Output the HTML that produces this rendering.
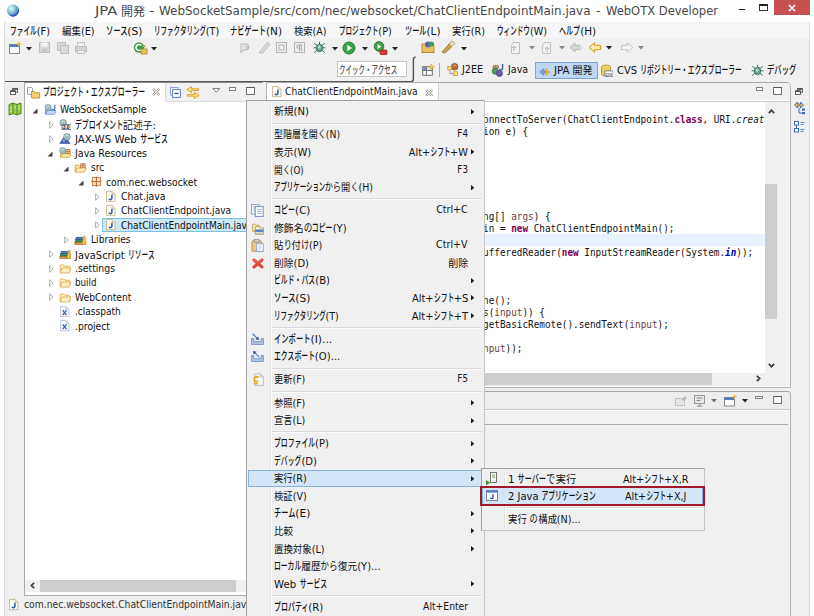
<!DOCTYPE html><html lang="ja"><head><meta charset="utf-8"><title>JPA 開発 - WebOTX Developer</title><style>
html,body{margin:0;padding:0;background:#fff;}
body{width:814px;height:616px;position:relative;overflow:hidden;}
.b{position:absolute;box-sizing:border-box;}
.t{position:absolute;white-space:pre;transform-origin:0 50%;}
.k{display:inline-block;font-weight:500;font-size:114.9%;transform:scaleX(0.5926);transform-origin:0 50%;}
.h{display:inline-block;font-size:111.7%;transform:scaleX(0.7619);transform-origin:0 50%;}
.j{display:inline-block;font-size:106.4%;transform:scaleX(0.9150);transform-origin:0 50%;}
#t1{transform:scaleX(1.2880);}
#t2{transform:scaleX(1.0077);}
#t3{transform:scaleX(1.2992);}
#t4{transform:scaleX(1.0382);}
#t5{transform:scaleX(1.1068);}
#t6{transform:scaleX(1.0015);}
#t7{transform:scaleX(0.9970);}
#t8{transform:scaleX(0.9832);}
#t9{transform:scaleX(1.0885);}
#t10{transform:scaleX(0.9738);}
#t11{transform:scaleX(1.0691);}
#t12{transform:scaleX(0.9682);}
#t13{transform:scaleX(0.9773);}
#t14{transform:scaleX(1.0647);}
#t15{transform:scaleX(0.9773);}
#t16{transform:scaleX(0.9821);}
#t17{transform:scaleX(1.0492);}
#t18{transform:scaleX(0.9733);}
#t19{transform:scaleX(0.9704);}
#t20{transform:scaleX(0.9698);}
#t21{transform:scaleX(1.0341);}
#t22{transform:scaleX(1.0103);}
#t23{transform:scaleX(1.0915);}
#t24{transform:scaleX(0.9880);}
#t25{transform:scaleX(0.9457);}
#t26{transform:scaleX(1.0235);}
#t27{transform:scaleX(1.0356);}
#t28{transform:scaleX(0.9689);}
#t29{transform:scaleX(0.9163);}
#t30{transform:scaleX(0.9350);}
#t31{transform:scaleX(0.9521);}
#t32{transform:scaleX(0.9240);}
#t33{transform:scaleX(0.9209);}
#t34{transform:scaleX(0.9297);}
#t35{transform:scaleX(1.0022);}
#t36{transform:scaleX(0.9422);}
#t37{transform:scaleX(0.8866);}
#t38{transform:scaleX(0.9289);}
#t39{transform:scaleX(0.9154);}
#t40{transform:scaleX(0.9368);}
#t41{transform:scaleX(0.9372);}
#t42{transform:scaleX(0.9293);}
#t43{transform:scaleX(0.9746);}
#t44{transform:scaleX(0.9745);}
#t45{transform:scaleX(0.9745);}
#t46{transform:scaleX(0.9746);}
#t47{transform:scaleX(0.9746);}
#t48{transform:scaleX(0.9744);}
#t49{transform:scaleX(0.9743);}
#t50{transform:scaleX(0.9746);}
#t51{transform:scaleX(0.9746);}
#t52{transform:scaleX(1.0205);}
#t53{transform:scaleX(0.9380);}
#t54{transform:scaleX(0.8868);}
#t55{transform:scaleX(1.0144);}
#t56{transform:scaleX(0.9867);}
#t57{transform:scaleX(0.8896);}
#t58{transform:scaleX(0.8868);}
#t59{transform:scaleX(0.9574);}
#t60{transform:scaleX(1.0480);}
#t61{transform:scaleX(0.9632);}
#t62{transform:scaleX(1.0221);}
#t63{transform:scaleX(0.9698);}
#t64{transform:scaleX(0.9674);}
#t65{transform:scaleX(1.0140);}
#t66{transform:scaleX(1.0407);}
#t67{transform:scaleX(1.0228);}
#t68{transform:scaleX(1.0856);}
#t69{transform:scaleX(0.9998);}
#t70{transform:scaleX(0.9678);}
#t71{transform:scaleX(1.0040);}
#t72{transform:scaleX(1.0881);}
#t73{transform:scaleX(1.0232);}
#t74{transform:scaleX(0.9603);}
#t75{transform:scaleX(0.8868);}
#t76{transform:scaleX(0.9603);}
#t77{transform:scaleX(0.9659);}
#t78{transform:scaleX(1.0200);}
#t79{transform:scaleX(1.0204);}
#t80{transform:scaleX(0.9684);}
#t81{transform:scaleX(0.9711);}
#t82{transform:scaleX(1.0756);}
#t83{transform:scaleX(0.9990);}
#t84{transform:scaleX(0.9801);}
#t85{transform:scaleX(1.0131);}
#t86{transform:scaleX(1.0256);}
#t87{transform:scaleX(1.0396);}
#t88{transform:scaleX(0.9360);}
#t89{transform:scaleX(1.0614);}
#t90{transform:scaleX(0.9808);}
#t91{transform:scaleX(1.0135);}
#t92{transform:scaleX(0.9770);}
#t93{transform:scaleX(0.9760);}
</style></head><body>
<div class="b" style="left:0px;top:0px;width:814px;height:616px;background:#ffffff;"></div>
<div class="b" style="left:4px;top:22px;width:806px;height:594px;background:#efefef;border:1px solid #dcdcdc;border-top:none;border-bottom:none;"></div>
<div class="b" style="left:5px;top:22px;width:804px;height:16px;background:#f6f6f6;"></div>
<div class="b" style="left:5px;top:38px;width:804px;height:43px;background:#f0f0f0;"></div>
<span class="t" id="t1" style="left:95.3px;top:4.050000000000001px;font-size:11.5px;line-height:15.5px;color:#484848;font-family:'DejaVu Sans','Noto Sans CJK JP',sans-serif;">JPA</span>
<span class="t" id="t2" style="left:120.5px;top:3.8000000000000007px;font-size:12px;line-height:16px;color:#484848;font-family:'DejaVu Sans','Noto Sans CJK JP',sans-serif;">開発</span>
<span class="t" id="t3" style="left:149px;top:4.050000000000001px;font-size:11.5px;line-height:15.5px;color:#484848;font-family:'DejaVu Sans','Noto Sans CJK JP',sans-serif;">-</span>
<span class="t" id="t4" style="left:158.5px;top:4.050000000000001px;font-size:11.5px;line-height:15.5px;color:#484848;font-family:'DejaVu Sans','Noto Sans CJK JP',sans-serif;">WebSocketSample/src/com/nec/websocket/ChatClientEndpointMain.java</span>
<span class="t" id="t5" style="left:595.5px;top:4.050000000000001px;font-size:11.5px;line-height:15.5px;color:#484848;font-family:'DejaVu Sans','Noto Sans CJK JP',sans-serif;">-</span>
<span class="t" id="t6" style="left:605.5px;top:4.050000000000001px;font-size:11.5px;line-height:15.5px;color:#484848;font-family:'DejaVu Sans','Noto Sans CJK JP',sans-serif;">WebOTX Developer</span>
<div class="b" style="left:738.8px;top:8.7px;width:6.4px;height:1.6px;background:#222;"></div>
<div class="b" style="left:759.2px;top:4px;width:8.4px;height:6.8px;border:1px solid #333;border-top:2px solid #222;"></div>
<div class="b" style="left:774px;top:0px;width:35.5px;height:14.7px;background:#c75050;"></div>
<svg class="b" style="left:787.5px;top:3.5px" width="8" height="8" viewBox="0 0 8 8"><path d="M1 1 L7 7 M7 1 L1 7" stroke="#fff" stroke-width="1.5" fill="none"/></svg>
<svg class="b" style="left:5.5px;top:3.5px" width="14" height="13" viewBox="0 0 14 13"><defs><radialGradient id="gl" cx="0.36" cy="0.34" r="0.75"><stop offset="0" stop-color="#dff6fd"/><stop offset="0.35" stop-color="#9fd0dc"/><stop offset="0.7" stop-color="#5f96c4"/><stop offset="1" stop-color="#2f57b0"/></radialGradient></defs><circle cx="7" cy="6.5" r="6" fill="url(#gl)"/><path d="M12.6 4.5 A6 6 0 0 1 3 11 A7.5 7.5 0 0 0 12.6 4.5Z" fill="#2c52b2" opacity=".85"/></svg>
<span class="t" id="t7" style="left:10.3px;top:23.95px;font-size:9.87px;line-height:14.5px;color:#111;font-family:'DejaVu Sans','Noto Sans CJK JP',sans-serif;"><span class="k" style="margin-right:-1.630em">ファイル</span>(F)</span>
<span class="t" id="t8" style="left:62px;top:23.95px;font-size:9.87px;line-height:14.5px;color:#111;font-family:'DejaVu Sans','Noto Sans CJK JP',sans-serif;"><span class="j" style="margin-right:-0.170em">編集</span>(E)</span>
<span class="t" id="t9" style="left:106px;top:23.95px;font-size:9.87px;line-height:14.5px;color:#111;font-family:'DejaVu Sans','Noto Sans CJK JP',sans-serif;"><span class="k" style="margin-right:-1.222em">ソース</span>(S)</span>
<span class="t" id="t10" style="left:153.6px;top:23.95px;font-size:9.87px;line-height:14.5px;color:#111;font-family:'DejaVu Sans','Noto Sans CJK JP',sans-serif;"><span class="k" style="margin-right:-3.259em">リファクタリング</span>(T)</span>
<span class="t" id="t11" style="left:230px;top:23.95px;font-size:9.87px;line-height:14.5px;color:#111;font-family:'DejaVu Sans','Noto Sans CJK JP',sans-serif;"><span class="k" style="margin-right:-2.037em">ナビゲート</span>(N)</span>
<span class="t" id="t12" style="left:294px;top:23.95px;font-size:9.87px;line-height:14.5px;color:#111;font-family:'DejaVu Sans','Noto Sans CJK JP',sans-serif;"><span class="j" style="margin-right:-0.170em">検索</span>(A)</span>
<span class="t" id="t13" style="left:339px;top:23.95px;font-size:9.87px;line-height:14.5px;color:#111;font-family:'DejaVu Sans','Noto Sans CJK JP',sans-serif;"><span class="k" style="margin-right:-2.444em">プロジェクト</span>(P)</span>
<span class="t" id="t14" style="left:404.5px;top:23.95px;font-size:9.87px;line-height:14.5px;color:#111;font-family:'DejaVu Sans','Noto Sans CJK JP',sans-serif;"><span class="k" style="margin-right:-1.222em">ツール</span>(L)</span>
<span class="t" id="t15" style="left:452px;top:23.95px;font-size:9.87px;line-height:14.5px;color:#111;font-family:'DejaVu Sans','Noto Sans CJK JP',sans-serif;"><span class="j" style="margin-right:-0.170em">実行</span>(R)</span>
<span class="t" id="t16" style="left:496.5px;top:23.95px;font-size:9.87px;line-height:14.5px;color:#111;font-family:'DejaVu Sans','Noto Sans CJK JP',sans-serif;"><span class="k" style="margin-right:-2.037em">ウィンドウ</span>(W)</span>
<span class="t" id="t17" style="left:559px;top:23.95px;font-size:9.87px;line-height:14.5px;color:#111;font-family:'DejaVu Sans','Noto Sans CJK JP',sans-serif;"><span class="k" style="margin-right:-1.222em">ヘルプ</span>(H)</span>
<svg class="b" style="left:8px;top:41px" width="14" height="14" viewBox="0 0 14 14"><rect x="1.5" y="3.5" width="10" height="9" fill="#fff" stroke="#8a8a8a"/><rect x="1.5" y="3.5" width="10" height="2.5" fill="#4f7fc0"/><path d="M11 0 L12 2.2 L14 3 L12 3.8 L11 6 L10 3.8 L8 3 L10 2.2Z" fill="#e8b93a"/></svg>
<svg class="b" style="left:26.3px;top:46.5px" width="6" height="4" viewBox="0 0 6 4"><path d="M0 0 H6 L3 3.5 Z" fill="#222"/></svg>
<svg class="b" style="left:38px;top:41px" width="13" height="13" viewBox="0 0 13 13"><rect x="1.5" y="1.5" width="10" height="10" fill="#dcdcdc" stroke="#bdbdbd"/><rect x="3.5" y="1.5" width="6" height="4" fill="#f4f4f4"/><rect x="3.5" y="7.5" width="6" height="4" fill="#c8c8c8"/></svg>
<svg class="b" style="left:56px;top:41px" width="14" height="14" viewBox="0 0 14 14"><rect x="1.5" y="1.5" width="8" height="8" fill="#dcdcdc" stroke="#c0c0c0"/><rect x="4.5" y="4.5" width="8" height="8" fill="#dcdcdc" stroke="#c0c0c0"/></svg>
<svg class="b" style="left:74px;top:41px" width="14" height="14" viewBox="0 0 14 14"><rect x="3.5" y="1.5" width="7" height="5" fill="#f2f2f2" stroke="#c4c4c4"/><rect x="1.5" y="5.5" width="11" height="5" fill="#d4d4d4" stroke="#bcbcbc"/><rect x="3.5" y="9.5" width="7" height="3" fill="#f2f2f2" stroke="#c4c4c4"/></svg>
<svg class="b" style="left:132.5px;top:41px" width="15" height="15" viewBox="0 0 15 15"><circle cx="6" cy="6.5" r="5.2" fill="#3a9a4a"/><path d="M8.3 4.6 A3 3 0 1 0 8.3 8.4" stroke="#fff" stroke-width="1.6" fill="none"/><rect x="8" y="8" width="6" height="5" fill="#e8c060" stroke="#a98a30" stroke-width=".8"/><path d="M9 6 h4 l-2 -2.4z" fill="#d8a020"/></svg>
<svg class="b" style="left:150.5px;top:46.5px" width="6" height="4" viewBox="0 0 6 4"><path d="M0 0 H6 L3 3.5 Z" fill="#222"/></svg>
<svg class="b" style="left:238.5px;top:41.5px" width="13" height="13" viewBox="0 0 13 13"><path d="M2 2 h5 a3 3 0 0 1 0 6 h-2 l-3 3z" fill="#e4e4e4" stroke="#b8b8b8"/><text x="6" y="7.5" font-size="6" fill="#a0a0a0" font-family="Liberation Sans,sans-serif">?</text></svg>
<svg class="b" style="left:258px;top:41px" width="13" height="13" viewBox="0 0 13 13"><path d="M1 12 L9 1.5 L12 3 L5 12Z" fill="#d8d8d8" stroke="#c2c2c2"/></svg>
<svg class="b" style="left:276px;top:42px" width="11" height="11" viewBox="0 0 11 11"><rect x=".5" y=".5" width="10" height="10" fill="#f0f0f0" stroke="#b4b4b4"/><rect x="3" y="3" width="5" height="5" fill="none" stroke="#b4b4b4"/></svg>
<svg class="b" style="left:294px;top:42px" width="11" height="11" viewBox="0 0 11 11"><rect x=".5" y=".5" width="10" height="10" fill="#f0f0f0" stroke="#b4b4b4"/><path d="M4 3 h4 M5.5 3 v6 M7.5 3 v6 M4 3 a1.5 1.5 0 0 0 0 3 h1.5" stroke="#a8a8a8" fill="none"/></svg>
<svg class="b" style="left:313px;top:41px" width="13" height="13" viewBox="0 0 13 13"><g stroke="#3f6f5c" stroke-width="1" fill="none"><path d="M1.2 2.2 L4 4.6 M11.8 2.2 L9 4.6 M.6 6.8 H3.4 M12.4 6.8 H9.6 M1.2 11.6 L4 9.2 M11.8 11.6 L9 9.2 M6.5 .8 V3.2"/></g><ellipse cx="6.5" cy="7" rx="3.1" ry="3.7" fill="#6aa594" stroke="#2f6a58" stroke-width=".9"/><ellipse cx="6.2" cy="6" rx="1.5" ry="1.7" fill="#b9dccf"/></svg>
<svg class="b" style="left:331.5px;top:46.5px" width="6" height="4" viewBox="0 0 6 4"><path d="M0 0 H6 L3 3.5 Z" fill="#222"/></svg>
<svg class="b" style="left:342px;top:41px" width="14" height="14" viewBox="0 0 14 14"><circle cx="7" cy="7" r="6" fill="#3da04a" stroke="#2a7a35"/><path d="M5.2 3.8 L10 7 L5.2 10.2Z" fill="#fff"/></svg>
<svg class="b" style="left:361.5px;top:46.5px" width="6" height="4" viewBox="0 0 6 4"><path d="M0 0 H6 L3 3.5 Z" fill="#222"/></svg>
<svg class="b" style="left:372.5px;top:40.5px" width="15" height="15" viewBox="0 0 15 15"><circle cx="6" cy="5.5" r="4.8" fill="#3da04a" stroke="#2a7a35"/><path d="M4.6 3 L8.3 5.5 L4.6 8Z" fill="#fff"/><rect x="7" y="9" width="7" height="4.5" rx="1" fill="#d83a3a" stroke="#a02020" stroke-width=".8"/></svg>
<svg class="b" style="left:392px;top:46.5px" width="6" height="4" viewBox="0 0 6 4"><path d="M0 0 H6 L3 3.5 Z" fill="#222"/></svg>
<svg class="b" style="left:421px;top:40px" width="15" height="14" viewBox="0 0 15 14"><path d="M1 4 h5 l1.5 1.5 h5.5 v7 h-12z" fill="#e9c165" stroke="#b08a30"/><circle cx="7" cy="4.5" r="3" fill="#5a6ab0"/><circle cx="10.5" cy="4" r="2.6" fill="#4a9a5a"/></svg>
<svg class="b" style="left:441px;top:40px" width="15" height="14" viewBox="0 0 15 14"><path d="M1 12 L8 4 L11 6.5 L4 13Z" fill="#c8a050" stroke="#8a6a20" stroke-width=".7"/><path d="M8 4 L11 1 L14 3.5 L11 6.5Z" fill="#e8e0c0" stroke="#a09060" stroke-width=".7"/></svg>
<svg class="b" style="left:461px;top:46.5px" width="6" height="4" viewBox="0 0 6 4"><path d="M0 0 H6 L3 3.5 Z" fill="#222"/></svg>
<svg class="b" style="left:510px;top:41px" width="13" height="14" viewBox="0 0 13 14"><path d="M3.5 1.5 h6 v11 h-8 v-8z" fill="#f2f2f2" stroke="#c0c0c0"/><path d="M4 10 v-5 M2 7 l2 -2 l2 2" stroke="#b0b0b0" fill="none"/></svg>
<svg class="b" style="left:529px;top:46px" width="6" height="4" viewBox="0 0 6 4"><path d="M0 0 H6 L3 3.5 Z" fill="#888"/></svg>
<svg class="b" style="left:541px;top:41px" width="13" height="14" viewBox="0 0 13 14"><path d="M3.5 1.5 h6 v11 h-8 v-8z" fill="#f2f2f2" stroke="#c0c0c0"/><path d="M6 11 v-5 M4 8 l2 -2 l2 2" stroke="#b0b0b0" fill="none"/></svg>
<svg class="b" style="left:559px;top:46px" width="6" height="4" viewBox="0 0 6 4"><path d="M0 0 H6 L3 3.5 Z" fill="#888"/></svg>
<svg class="b" style="left:569px;top:42px" width="14" height="11" viewBox="0 0 14 11"><path d="M1 5.5 L6 1 V3.5 H10 V7.5 H6 V10Z" fill="#d8d8d8" stroke="#b8b8b8"/><path d="M10 2 l3 3.5 l-3 3.5" fill="none" stroke="#c8c8c8"/></svg>
<svg class="b" style="left:588px;top:42px" width="14" height="11" viewBox="0 0 14 11"><path d="M1 5.5 L6.5 0.8 V3.3 H12.5 V7.7 H6.5 V10.2Z" fill="#fbe9a8" stroke="#d99a20"/></svg>
<svg class="b" style="left:606px;top:46px" width="6" height="4" viewBox="0 0 6 4"><path d="M0 0 H6 L3 3.5 Z" fill="#222"/></svg>
<svg class="b" style="left:620px;top:42px" width="14" height="11" viewBox="0 0 14 11"><path d="M13 5.5 L7.5 0.8 V3.3 H1.5 V7.7 H7.5 V10.2Z" fill="#f4f4f4" stroke="#c4c4c4"/></svg>
<svg class="b" style="left:638px;top:46px" width="6" height="4" viewBox="0 0 6 4"><path d="M0 0 H6 L3 3.5 Z" fill="#888"/></svg>
<div class="b" style="left:336.8px;top:61.4px;width:70.6px;height:15.8px;background:#fff;border:1px solid #c4c4c4;"></div>
<span class="t" id="t18" style="left:339.4px;top:62.75px;font-size:9.87px;line-height:14.5px;color:#555;font-family:'DejaVu Sans','Noto Sans CJK JP',sans-serif;"><span class="k" style="margin-right:-3.667em">クイック・アクセス</span></span>
<svg class="b" style="left:421.5px;top:63.5px" width="13" height="13" viewBox="0 0 13 13"><rect x=".7" y="2.7" width="9.6" height="8.6" fill="#fff" stroke="#6e6e6e" stroke-width="1"/><rect x="1.2" y="3.2" width="3" height="3" fill="#5f8fd8"/><rect x="4.6" y="3.2" width="5.2" height="3" fill="#cfe6cf"/><path d="M.7 6.5 h9.6 M4.4 2.7 v8.6" stroke="#6e6e6e" stroke-width="1" fill="none"/><path d="M9.6 0 l1 2 l2 .9 l-2 .9 l-1 2 l-1 -2 l-2 -.9 l2 -.9z" fill="#f2c34a" stroke="#d89a20" stroke-width=".5"/></svg>
<div class="b" style="left:439px;top:63px;width:1px;height:14px;background:#a4acb8;"></div>
<svg class="b" style="left:446.6px;top:63.4px" width="12" height="13" viewBox="0 0 12 13"><path d="M3 5.5 V10.6 H6.4" stroke="#8a8a8a" stroke-width=".9" fill="none"/><circle cx="7.6" cy="3.8" r="3.3" fill="#b8683a" stroke="#7c3f1c" stroke-width=".7"/><path d="M5.6 2.8 q2 -1.6 4 0" stroke="#e8b896" stroke-width=".9" fill="none"/><rect x=".8" y="3.6" width="3.6" height="3.4" fill="#f6dc7a" stroke="#b89a30" stroke-width=".7"/><rect x="6.2" y="8.8" width="4.2" height="3.6" fill="#f6dc7a" stroke="#b89a30" stroke-width=".7"/></svg>
<span class="t" id="t19" style="left:461.6px;top:62.95px;font-size:9.87px;line-height:14.5px;color:#111;font-family:'DejaVu Sans','Noto Sans CJK JP',sans-serif;">J2EE</span>
<svg class="b" style="left:491.2px;top:62.8px" width="14" height="14" viewBox="0 0 14 14"><path d="M2.2 2.6 h5 v3 h-5z M4.7 1.8 v4.4 M1.6 4.1 h6.2" stroke="#9a6a3a" stroke-width=".8" fill="#ecd8b0"/><circle cx="4.2" cy="8.2" r="3.1" fill="#4f9a5c" stroke="#2f6a3c" stroke-width=".6"/><circle cx="8.4" cy="10.4" r="3.1" fill="#6a5aa8" stroke="#463a80" stroke-width=".6"/><path d="M11.6 1 v4.4 a1.7 1.7 0 0 1 -3.2 .6" stroke="#3a62b4" stroke-width="1.4" fill="none"/></svg>
<span class="t" id="t20" style="left:507.8px;top:62.95px;font-size:9.87px;line-height:14.5px;color:#111;font-family:'DejaVu Sans','Noto Sans CJK JP',sans-serif;">Java</span>
<div class="b" style="left:535.2px;top:61.8px;width:62.8px;height:16.8px;background:#bfd7f2;border:1px solid #7fa4cf;"></div>
<svg class="b" style="left:539.2px;top:67.6px" width="11.2" height="8" viewBox="0 0 11.2 8"><path d="M4.6 4 H7" stroke="#2a3a5a" stroke-width="1.1"/><path d="M.5 4 L4.7 .5 V7.5Z" fill="#7da2d6" stroke="#5580bc" stroke-width=".6"/><path d="M10.8 4 L6.7 .5 V7.5Z" fill="#eab558" stroke="#cf9232" stroke-width=".6"/></svg>
<span class="t" id="t21" style="left:553.7px;top:62.95px;font-size:9.87px;line-height:14.5px;color:#111;font-family:'DejaVu Sans','Noto Sans CJK JP',sans-serif;">JPA <span class="j" style="margin-right:-0.170em">開発</span></span>
<svg class="b" style="left:600px;top:64px" width="13" height="13" viewBox="0 0 13 13"><ellipse cx="6" cy="3" rx="4.5" ry="2" fill="#f4d878" stroke="#a88a28" stroke-width=".8"/><path d="M1.5 3 v7 a4.5 2 0 0 0 9 0 v-7" fill="#f0cc60" stroke="#a88a28" stroke-width=".8"/><rect x="5" y="7" width="8" height="5.5" fill="#fff" stroke="#5a6a9a" stroke-width=".7"/><text x="5.6" y="11.6" font-size="4.5" font-family="Liberation Sans,sans-serif" fill="#334">cvs</text></svg>
<span class="t" id="t22" style="left:617px;top:62.95px;font-size:9.87px;line-height:14.5px;color:#111;font-family:'DejaVu Sans','Noto Sans CJK JP',sans-serif;">CVS <span class="k" style="margin-right:-6.111em">リポジトリー・エクスプローラー</span></span>
<svg class="b" style="left:751px;top:64px" width="13" height="13" viewBox="0 0 13 13"><g stroke="#3f6f5c" stroke-width="1" fill="none"><path d="M1.2 2.2 L4 4.6 M11.8 2.2 L9 4.6 M.6 6.8 H3.4 M12.4 6.8 H9.6 M1.2 11.6 L4 9.2 M11.8 11.6 L9 9.2 M6.5 .8 V3.2"/></g><ellipse cx="6.5" cy="7" rx="3.1" ry="3.7" fill="#6aa594" stroke="#2f6a58" stroke-width=".9"/><ellipse cx="6.2" cy="6" rx="1.5" ry="1.7" fill="#b9dccf"/></svg>
<span class="t" id="t23" style="left:767.4px;top:62.95px;font-size:9.87px;line-height:14.5px;color:#111;font-family:'DejaVu Sans','Noto Sans CJK JP',sans-serif;"><span class="k" style="margin-right:-1.630em">デバッグ</span></span>
<svg class="b" style="left:9.8px;top:87.8px" width="8" height="7" viewBox="0 0 8 7"><rect x="2.6" y=".6" width="4.8" height="3.6" fill="#fff" stroke="#4a4a4a" stroke-width=".9"/><path d="M2.6 1.1h4.8" stroke="#4a4a4a" stroke-width="1.3"/><rect x=".6" y="2.8" width="4.8" height="3.6" fill="#fff" stroke="#4a4a4a" stroke-width=".9"/><path d="M.6 3.3h4.8" stroke="#4a4a4a" stroke-width="1.3"/></svg>
<svg class="b" style="left:8px;top:102px" width="14" height="14" viewBox="0 0 14 14"><path d="M1 2.5 L5 1 L9 2.5 L13 1 V11.5 L9 13 L5 11.5 L1 13Z" fill="#9ccc3e" stroke="#3f7d1f" stroke-width=".9"/><path d="M5 1V11.5M9 2.5V13" stroke="#4d8f25" stroke-width="1"/><path d="M2 6h2M6 5h2M10 7h2M2 9h2M10 4h2" stroke="#fff" stroke-width=".8"/></svg>
<div class="b" style="left:5px;top:80.9px;width:405px;height:1.5px;background:#5a5a5a;"></div>
<svg class="b" style="left:405px;top:56px" width="12" height="27" viewBox="0 0 12 27"><path d="M10.6 1 Q8.4 1.4 8.4 3.6 V23 Q8.4 25.65 5.6 25.65 H0" stroke="#525252" stroke-width="1.4" fill="none"/></svg>
<div class="b" style="left:23.5px;top:81.5px;width:239.5px;height:514px;background:#ffffff;border:1px solid #ababab;border-top:1.5px solid #858585;"></div>
<div class="b" style="left:24.5px;top:83px;width:238px;height:17.5px;background:#f0f0f0;"></div>
<div class="b" style="left:24.5px;top:83px;width:141px;height:18px;background:#ffffff;"></div>
<div class="b" style="left:165px;top:83px;width:1px;height:17.5px;background:#dadada;"></div>
<div class="b" style="left:165.5px;top:100.5px;width:97px;height:1px;background:#dcdcdc;"></div>
<div class="b" style="left:24.5px;top:100.5px;width:141px;height:1px;background:#ffffff;"></div>
<svg class="b" style="left:27px;top:86px" width="14" height="13" viewBox="0 0 14 13"><path d="M.5 1.5 h4 l1 1 v6 h-5z" fill="#fff" stroke="#8a8a9a" stroke-width=".8"/><path d="M4.5 5.5 h3 l1.2 1.3 h4 v5.2 h-8.2z" fill="#f4cf6a" stroke="#b08820" stroke-width=".8"/></svg>
<span class="t" id="t24" style="left:43px;top:85.39999999999999px;font-size:10.15px;line-height:14.8px;color:#111;font-family:'DejaVu Sans','Noto Sans CJK JP',sans-serif;"><span class="k" style="margin-right:-6.111em">プロジェクト・エクスプローラー</span></span>
<svg class="b" style="left:152px;top:88.4px" width="8.4" height="7.8" viewBox="0 0 8 8"><path d="M.5 1.6 L1.6 .5 L4 2.9 L6.4 .5 L7.5 1.6 L5.1 4 L7.5 6.4 L6.4 7.5 L4 5.1 L1.6 7.5 L.5 6.4 L2.9 4Z" fill="#fff" stroke="#7a7a7a" stroke-width=".8"/></svg>
<svg class="b" style="left:169.5px;top:87px" width="11" height="11" viewBox="0 0 11 11"><rect x=".5" y=".5" width="7.5" height="7.5" fill="#eef3fb" stroke="#8fa9d4"/><rect x="2.6" y="2.6" width="7.8" height="7.8" fill="#fff" stroke="#5f82c4"/><path d="M4.4 6.5h4.2" stroke="#2f4a8a" stroke-width="1.3"/></svg>
<svg class="b" style="left:186px;top:85.5px" width="14" height="13" viewBox="0 0 14 13"><path d="M12.6 4.4 H5.6 V6.8 L.8 3.6 L5.6 .6 V2.8 H12.6Z" fill="#f9de82" stroke="#d9a020" stroke-width=".9"/><path d="M1.4 8.6 H8.4 V6.2 L13.2 9.4 L8.4 12.4 V10.2 H1.4Z" fill="#f9de82" stroke="#d9a020" stroke-width=".9"/></svg>
<svg class="b" style="left:211.5px;top:88px" width="9" height="5" viewBox="0 0 9 5"><path d="M.8 .6 H7.8 L4.3 4.2Z" fill="#fff" stroke="#666" stroke-width=".9"/></svg>
<div class="b" style="left:228.6px;top:87.2px;width:7.8px;height:3.4px;background:#fff;border:1px solid #808080;"></div>
<div class="b" style="left:246.4px;top:87.0px;width:8.6px;height:8px;background:#fff;border:1px solid #707070;border-top:1.8px solid #5a5a5a;"></div>
<div class="b" style="left:102px;top:218.07999999999998px;width:161px;height:14.4px;background:#cde8f5;border:1px solid #7cc0e4;"></div>
<svg class="b" style="left:32.1px;top:108.20px" width="6.00" height="6.00" viewBox="0 0 6 6"><path d="M5.5 .5 V5.5 H.5Z" fill="#404040"/></svg>
<svg class="b" style="left:43.7px;top:104.20px" width="12.80" height="11.20" viewBox="0 0 16 14"><path d="M2 12.5 V6 h4.5 l1.2 1.3 h6 V9" fill="#a9c9ef" stroke="#5b86c4" stroke-width=".9"/><path d="M2 12.8 L4.3 8.2 H15.4 L13 12.8Z" fill="#c4dbf6" stroke="#5b86c4" stroke-width=".9"/><circle cx="5.2" cy="4.6" r="3.9" fill="#9dbcc0" stroke="#5e8288" stroke-width=".7"/><path d="M2.3000000000000003 4.6 q3.9 -3.9 4.9 -.6" stroke="#e4f0ee" stroke-width="1.1" fill="none"/><path d="M13.6 1 v4.6 a1.7 1.7 0 0 1 -3.2 .6" fill="none" stroke="#3b62b0" stroke-width="1.4"/></svg>
<span class="t" id="t25" style="left:60px;top:103.45px;font-size:9.87px;line-height:14.5px;color:#111;font-family:'DejaVu Sans','Noto Sans CJK JP',sans-serif;">WebSocketSample</span>
<svg class="b" style="left:48.7px;top:120.51px" width="5.00" height="8.00" viewBox="0 0 5 8"><path d="M.6 .8 L4.2 4 L.6 7.2Z" fill="#fff" stroke="#a8a8a8" stroke-width=".9"/></svg>
<svg class="b" style="left:58.7px;top:118.61px" width="12.80" height="11.20" viewBox="0 0 16 14"><circle cx="5.2" cy="4.8" r="4.2" fill="#9dbcc0" stroke="#5e8288" stroke-width=".7"/><path d="M2.0 4.8 q4.2 -4.2 5.2 -.6" stroke="#e4f0ee" stroke-width="1.1" fill="none"/><rect x="3.8" y="7.2" width="11.6" height="6.2" fill="#eef1f4" stroke="#4c5a64" stroke-width="1"/><text x="4.6" y="12.6" font-size="6.2" font-weight="bold" font-family="Liberation Sans,sans-serif" fill="#16202a">3.0</text></svg>
<span class="t" id="t26" style="left:75px;top:117.86px;font-size:9.87px;line-height:14.5px;color:#111;font-family:'DejaVu Sans','Noto Sans CJK JP',sans-serif;"><span class="k" style="margin-right:-2.852em">デプロイメント</span><span class="j" style="margin-right:-0.255em">記述子</span>:</span>
<svg class="b" style="left:48.7px;top:134.92px" width="5.00" height="8.00" viewBox="0 0 5 8"><path d="M.6 .8 L4.2 4 L.6 7.2Z" fill="#fff" stroke="#a8a8a8" stroke-width=".9"/></svg>
<svg class="b" style="left:58.7px;top:133.02px" width="12.80" height="11.20" viewBox="0 0 16 14"><path d="M1 13.2 L5.8 5.6 L8.2 9 L10 7.2 L13.8 13.2Z" fill="#4668b0" stroke="#2a4480" stroke-width=".7"/><path d="M4.8 10.4 L6 8 L7.4 10.4Z" fill="#dfe8f8"/><circle cx="9.8" cy="4.8" r="4.2" fill="#9dbcc0" stroke="#5e8288" stroke-width=".7"/><path d="M6.6000000000000005 4.8 q4.2 -4.2 5.2 -.6" stroke="#e4f0ee" stroke-width="1.1" fill="none"/></svg>
<span class="t" id="t27" style="left:75px;top:132.27px;font-size:9.87px;line-height:14.5px;color:#111;font-family:'DejaVu Sans','Noto Sans CJK JP',sans-serif;">JAX-WS Web <span class="k" style="margin-right:-1.630em">サービス</span></span>
<svg class="b" style="left:47.1px;top:151.43px" width="6.00" height="6.00" viewBox="0 0 6 6"><path d="M5.5 .5 V5.5 H.5Z" fill="#404040"/></svg>
<svg class="b" style="left:58.7px;top:147.43px" width="12.80" height="11.20" viewBox="0 0 16 14"><path d="M2 12.6 V6 h3 l1.2 1.3 h7.6 V9" fill="#f6dc92" stroke="#c98f26" stroke-width=".9"/><path d="M2 12.8 L4.3 8.4 H15.5 L13 12.8Z" fill="#fbeab0" stroke="#c98f26" stroke-width=".9"/><path d="M8.2 3.2 h5.6 v4.6 h-5.6z M11 2.4 v6 M7.6 5.5 h6.8" stroke="#a8642c" stroke-width=".9" fill="#fbe8c8"/><circle cx="4.6" cy="4.4" r="3.8" fill="#9dbcc0" stroke="#5e8288" stroke-width=".7"/><path d="M1.7999999999999998 4.4 q3.8 -3.8 4.8 -.6" stroke="#e4f0ee" stroke-width="1.1" fill="none"/></svg>
<span class="t" id="t28" style="left:75px;top:146.68px;font-size:9.87px;line-height:14.5px;color:#111;font-family:'DejaVu Sans','Noto Sans CJK JP',sans-serif;">Java Resources</span>
<svg class="b" style="left:62.800000000000004px;top:165.84px" width="6.00" height="6.00" viewBox="0 0 6 6"><path d="M5.5 .5 V5.5 H.5Z" fill="#404040"/></svg>
<svg class="b" style="left:74.4px;top:161.84px" width="12.80" height="11.20" viewBox="0 0 16 14"><path d="M1.5 12.4 V4.8 a1 1 0 0 1 1 -1 h3 l1.4 1.5 h6.6 V7.6" fill="#fbe9ae" stroke="#d29a30" stroke-width="1"/><path d="M8.4 2.2 h5.4 v4.8 h-5.4z M11.1 1.4 v6.2 M7.8 4.6 h6.6" stroke="#a8642c" stroke-width=".9" fill="#fdf0d6"/><path d="M1.5 12.6 L4 7.6 H15.3 L12.8 12.6Z" fill="#fdf2c6" stroke="#d29a30" stroke-width="1"/></svg>
<span class="t" id="t29" style="left:90.7px;top:161.09px;font-size:9.87px;line-height:14.5px;color:#111;font-family:'DejaVu Sans','Noto Sans CJK JP',sans-serif;">src</span>
<svg class="b" style="left:77.89999999999999px;top:180.25px" width="6.00" height="6.00" viewBox="0 0 6 6"><path d="M5.5 .5 V5.5 H.5Z" fill="#404040"/></svg>
<svg class="b" style="left:89.5px;top:176.25px" width="12.80" height="11.20" viewBox="0 0 16 14"><rect x="3" y="2" width="10" height="10" fill="#fbe3c4" stroke="#c27a3e" stroke-width="1.1"/><path d="M8 .6 V13.4 M1.6 7 H14.4" stroke="#b0642c" stroke-width="1.2"/></svg>
<span class="t" id="t30" style="left:105.8px;top:175.5px;font-size:9.87px;line-height:14.5px;color:#111;font-family:'DejaVu Sans','Noto Sans CJK JP',sans-serif;">com.nec.websocket</span>
<svg class="b" style="left:94.5px;top:192.56px" width="5.00" height="8.00" viewBox="0 0 5 8"><path d="M.6 .8 L4.2 4 L.6 7.2Z" fill="#fff" stroke="#a8a8a8" stroke-width=".9"/></svg>
<svg class="b" style="left:106.2px;top:190.66px" width="9.60" height="11.20" viewBox="0 0 12 14"><path d="M.6 .6 h7 l3.6 3.6 v9.2 h-10.6z" fill="#fdfcf4" stroke="#c2aa7c" stroke-width="1"/><path d="M7.6 .6 v3.6 h3.6" fill="#f0e8d0" stroke="#c2aa7c" stroke-width=".8"/><path d="M7.4 4.6 v4.4 a2 2 0 0 1 -3.8 .7" fill="none" stroke="#2f62b4" stroke-width="2"/></svg>
<span class="t" id="t31" style="left:120.8px;top:189.91px;font-size:9.87px;line-height:14.5px;color:#111;font-family:'DejaVu Sans','Noto Sans CJK JP',sans-serif;">Chat.java</span>
<svg class="b" style="left:94.5px;top:206.97px" width="5.00" height="8.00" viewBox="0 0 5 8"><path d="M.6 .8 L4.2 4 L.6 7.2Z" fill="#fff" stroke="#a8a8a8" stroke-width=".9"/></svg>
<svg class="b" style="left:106.2px;top:205.07px" width="9.60" height="11.20" viewBox="0 0 12 14"><path d="M.6 .6 h7 l3.6 3.6 v9.2 h-10.6z" fill="#fdfcf4" stroke="#c2aa7c" stroke-width="1"/><path d="M7.6 .6 v3.6 h3.6" fill="#f0e8d0" stroke="#c2aa7c" stroke-width=".8"/><path d="M7.4 4.6 v4.4 a2 2 0 0 1 -3.8 .7" fill="none" stroke="#2f62b4" stroke-width="2"/></svg>
<span class="t" id="t32" style="left:120.8px;top:204.32000000000002px;font-size:9.87px;line-height:14.5px;color:#111;font-family:'DejaVu Sans','Noto Sans CJK JP',sans-serif;">ChatClientEndpoint.java</span>
<svg class="b" style="left:94.5px;top:221.38px" width="5.00" height="8.00" viewBox="0 0 5 8"><path d="M.6 .8 L4.2 4 L.6 7.2Z" fill="#fff" stroke="#a8a8a8" stroke-width=".9"/></svg>
<svg class="b" style="left:106.2px;top:219.48px" width="9.60" height="11.20" viewBox="0 0 12 14"><path d="M.6 .6 h7 l3.6 3.6 v9.2 h-10.6z" fill="#fdfcf4" stroke="#c2aa7c" stroke-width="1"/><path d="M7.6 .6 v3.6 h3.6" fill="#f0e8d0" stroke="#c2aa7c" stroke-width=".8"/><path d="M7.4 4.6 v4.4 a2 2 0 0 1 -3.8 .7" fill="none" stroke="#2f62b4" stroke-width="2"/></svg>
<span class="t" id="t33" style="left:120.8px;top:218.73px;font-size:9.87px;line-height:14.5px;color:#111;font-family:'DejaVu Sans','Noto Sans CJK JP',sans-serif;">ChatClientEndpointMain.java</span>
<svg class="b" style="left:64.4px;top:235.79px" width="5.00" height="8.00" viewBox="0 0 5 8"><path d="M.6 .8 L4.2 4 L.6 7.2Z" fill="#fff" stroke="#a8a8a8" stroke-width=".9"/></svg>
<svg class="b" style="left:74.4px;top:233.89px" width="12.80" height="11.20" viewBox="0 0 16 14"><rect x="1" y="10" width="10.5" height="3" fill="#e09a3c" stroke="#8a5a18" stroke-width=".7"/><rect x="1.8" y="7" width="9.5" height="3" fill="#3f8a6a" stroke="#1f5a40" stroke-width=".7"/><rect x="2.6" y="4" width="8" height="3" fill="#4a7ab8" stroke="#2a4a80" stroke-width=".7"/><path d="M9.5 13 L12 3 L13.5 2.5 L15.2 13Z" fill="#f0c048" stroke="#a87818" stroke-width=".7"/></svg>
<span class="t" id="t34" style="left:90.7px;top:233.14000000000001px;font-size:9.87px;line-height:14.5px;color:#111;font-family:'DejaVu Sans','Noto Sans CJK JP',sans-serif;">Libraries</span>
<svg class="b" style="left:48.7px;top:250.20px" width="5.00" height="8.00" viewBox="0 0 5 8"><path d="M.6 .8 L4.2 4 L.6 7.2Z" fill="#fff" stroke="#a8a8a8" stroke-width=".9"/></svg>
<svg class="b" style="left:58.7px;top:248.30px" width="12.80" height="11.20" viewBox="0 0 16 14"><rect x="1" y="10" width="10.5" height="3" fill="#e09a3c" stroke="#8a5a18" stroke-width=".7"/><rect x="1.8" y="7" width="9.5" height="3" fill="#3f8a6a" stroke="#1f5a40" stroke-width=".7"/><rect x="2.6" y="4" width="8" height="3" fill="#4a7ab8" stroke="#2a4a80" stroke-width=".7"/><path d="M9.5 13 L12 3 L13.5 2.5 L15.2 13Z" fill="#f0c048" stroke="#a87818" stroke-width=".7"/></svg>
<span class="t" id="t35" style="left:75px;top:247.54999999999998px;font-size:9.87px;line-height:14.5px;color:#111;font-family:'DejaVu Sans','Noto Sans CJK JP',sans-serif;">JavaScript <span class="k" style="margin-right:-1.630em">リソース</span></span>
<svg class="b" style="left:48.7px;top:264.61px" width="5.00" height="8.00" viewBox="0 0 5 8"><path d="M.6 .8 L4.2 4 L.6 7.2Z" fill="#fff" stroke="#a8a8a8" stroke-width=".9"/></svg>
<svg class="b" style="left:58.7px;top:262.71px" width="12.80" height="11.20" viewBox="0 0 16 14"><path d="M1.5 12 V3.5 a1 1 0 0 1 1 -1 h3.5 l1.5 1.6 h5 a1 1 0 0 1 1 1 V6" fill="#fdf3d0" stroke="#d9a03c" stroke-width="1"/><path d="M1.5 12.5 L4 6.2 H15.2 L12.8 12.5Z" fill="#fdf0c4" stroke="#d9a03c" stroke-width="1"/></svg>
<span class="t" id="t36" style="left:75px;top:261.96px;font-size:9.87px;line-height:14.5px;color:#111;font-family:'DejaVu Sans','Noto Sans CJK JP',sans-serif;">.settings</span>
<svg class="b" style="left:48.7px;top:279.02px" width="5.00" height="8.00" viewBox="0 0 5 8"><path d="M.6 .8 L4.2 4 L.6 7.2Z" fill="#fff" stroke="#a8a8a8" stroke-width=".9"/></svg>
<svg class="b" style="left:58.7px;top:277.12px" width="12.80" height="11.20" viewBox="0 0 16 14"><path d="M1.5 12 V3.5 a1 1 0 0 1 1 -1 h3.5 l1.5 1.6 h5 a1 1 0 0 1 1 1 V6" fill="#fdf3d0" stroke="#d9a03c" stroke-width="1"/><path d="M1.5 12.5 L4 6.2 H15.2 L12.8 12.5Z" fill="#fdf0c4" stroke="#d9a03c" stroke-width="1"/></svg>
<span class="t" id="t37" style="left:75px;top:276.37px;font-size:9.87px;line-height:14.5px;color:#111;font-family:'DejaVu Sans','Noto Sans CJK JP',sans-serif;">build</span>
<svg class="b" style="left:48.7px;top:293.43px" width="5.00" height="8.00" viewBox="0 0 5 8"><path d="M.6 .8 L4.2 4 L.6 7.2Z" fill="#fff" stroke="#a8a8a8" stroke-width=".9"/></svg>
<svg class="b" style="left:58.7px;top:291.53px" width="12.80" height="11.20" viewBox="0 0 16 14"><path d="M1.5 12 V3.5 a1 1 0 0 1 1 -1 h3.5 l1.5 1.6 h5 a1 1 0 0 1 1 1 V6" fill="#fdf3d0" stroke="#d9a03c" stroke-width="1"/><path d="M1.5 12.5 L4 6.2 H15.2 L12.8 12.5Z" fill="#fdf0c4" stroke="#d9a03c" stroke-width="1"/></svg>
<span class="t" id="t38" style="left:75px;top:290.78px;font-size:9.87px;line-height:14.5px;color:#111;font-family:'DejaVu Sans','Noto Sans CJK JP',sans-serif;">WebContent</span>
<svg class="b" style="left:60.4px;top:305.94px" width="9.60" height="11.20" viewBox="0 0 12 14"><path d="M.6 .6 h7 l3.6 3.6 v9.2 h-10.6z" fill="#f4f7fc" stroke="#b4bccc" stroke-width="1"/><path d="M7.6 .6 v3.6 h3.6" fill="#e4e8f0" stroke="#b4bccc" stroke-width=".8"/><path d="M3.4 5.4 L8.2 11.4 M8.2 5.4 L3.4 11.4" stroke="#2f62b4" stroke-width="1.6"/></svg>
<span class="t" id="t39" style="left:75px;top:305.19px;font-size:9.87px;line-height:14.5px;color:#111;font-family:'DejaVu Sans','Noto Sans CJK JP',sans-serif;">.classpath</span>
<svg class="b" style="left:60.4px;top:320.35px" width="9.60" height="11.20" viewBox="0 0 12 14"><path d="M.6 .6 h7 l3.6 3.6 v9.2 h-10.6z" fill="#f4f7fc" stroke="#b4bccc" stroke-width="1"/><path d="M7.6 .6 v3.6 h3.6" fill="#e4e8f0" stroke="#b4bccc" stroke-width=".8"/><path d="M3.4 5.4 L8.2 11.4 M8.2 5.4 L3.4 11.4" stroke="#2f62b4" stroke-width="1.6"/></svg>
<span class="t" id="t40" style="left:75px;top:319.59999999999997px;font-size:9.87px;line-height:14.5px;color:#111;font-family:'DejaVu Sans','Noto Sans CJK JP',sans-serif;">.project</span>
<div class="b" style="left:24.5px;top:579.7px;width:238px;height:12.2px;background:#f0f0f0;"></div>
<div class="b" style="left:39.5px;top:579.7px;width:196.5px;height:12.2px;background:#cdcdcd;"></div>
<svg class="b" style="left:29.5px;top:582.2px" width="5" height="7" viewBox="0 0 5 7"><path d="M4.2 .8 L1.3 3.5 L4.2 6.2" stroke="#404040" stroke-width="1.7" fill="none"/></svg>
<svg class="b" style="left:9px;top:599.40px" width="9.60" height="11.20" viewBox="0 0 12 14"><path d="M.6 .6 h7 l3.6 3.6 v9.2 h-10.6z" fill="#fdfcf4" stroke="#c2aa7c" stroke-width="1"/><path d="M7.6 .6 v3.6 h3.6" fill="#f0e8d0" stroke="#c2aa7c" stroke-width=".8"/><path d="M7.4 4.6 v4.4 a2 2 0 0 1 -3.8 .7" fill="none" stroke="#2f62b4" stroke-width="2"/></svg>
<span class="t" id="t41" style="left:24px;top:597.55px;font-size:9.87px;line-height:14.5px;color:#333;font-family:'DejaVu Sans','Noto Sans CJK JP',sans-serif;">com.nec.websocket.ChatClientEndpointMain.java</span>
<div class="b" style="left:266px;top:82px;width:525px;height:305.5px;background:#ffffff;border:1px solid #b4b4b4;border-top:1.2px solid #a8a8a8;border-radius:0 5px 0 0;"></div>
<div class="b" style="left:267px;top:83.2px;width:523px;height:17.3px;background:#f0f0f0;border-radius:0 4px 0 0;"></div>
<div class="b" style="left:267px;top:83px;width:170.5px;height:18px;background:#ffffff;"></div>
<div class="b" style="left:437.5px;top:83px;width:1px;height:17.5px;background:#d4d4d4;"></div>
<div class="b" style="left:437.5px;top:100.5px;width:352.5px;height:1px;background:#c8c8c8;"></div>
<svg class="b" style="left:272px;top:86.40px" width="9.60" height="11.20" viewBox="0 0 12 14"><path d="M.6 .6 h7 l3.6 3.6 v9.2 h-10.6z" fill="#fdfcf4" stroke="#c2aa7c" stroke-width="1"/><path d="M7.6 .6 v3.6 h3.6" fill="#f0e8d0" stroke="#c2aa7c" stroke-width=".8"/><path d="M7.4 4.6 v4.4 a2 2 0 0 1 -3.8 .7" fill="none" stroke="#2f62b4" stroke-width="2"/></svg>
<span class="t" id="t42" style="left:285.3px;top:85.25px;font-size:9.87px;line-height:14.5px;color:#1a1a1a;font-family:'DejaVu Sans','Noto Sans CJK JP',sans-serif;">ChatClientEndpointMain.java</span>
<svg class="b" style="left:424.6px;top:88.6px" width="8.4" height="7.8" viewBox="0 0 8 8"><path d="M.5 1.6 L1.6 .5 L4 2.9 L6.4 .5 L7.5 1.6 L5.1 4 L7.5 6.4 L6.4 7.5 L4 5.1 L1.6 7.5 L.5 6.4 L2.9 4Z" fill="#fff" stroke="#7a7a7a" stroke-width=".8"/></svg>
<div class="b" style="left:755.5px;top:87.2px;width:7.8px;height:3.4px;background:#fff;border:1px solid #808080;"></div>
<div class="b" style="left:773.3px;top:87.0px;width:8.6px;height:8px;background:#fff;border:1px solid #707070;border-top:1.8px solid #5a5a5a;"></div>
<div class="b" style="left:267px;top:101.5px;width:498px;height:271px;background:#ffffff;"></div>
<div class="b" style="left:267px;top:233.5px;width:498px;height:12px;background:#e8f2fe;"></div>
<div class="b" style="left:777.5px;top:101.5px;width:12.5px;height:284.5px;background:#f1f1f1;"></div>
<div class="b" style="left:765px;top:101.5px;width:12.5px;height:284.5px;background:#f0f0f0;"></div>
<div class="b" style="left:765px;top:184px;width:12.3px;height:135px;background:#cdcdcd;"></div>
<svg class="b" style="left:767.5px;top:108.5px" width="7" height="5" viewBox="0 0 7 5"><path d="M.8 4.2 L3.5 1.3 L6.2 4.2" stroke="#404040" stroke-width="1.7" fill="none"/></svg>
<svg class="b" style="left:767.5px;top:362.5px" width="7" height="5" viewBox="0 0 7 5"><path d="M.8 .8 L3.5 3.7 L6.2 .8" stroke="#404040" stroke-width="1.7" fill="none"/></svg>
<div class="b" style="left:267px;top:372.5px;width:498px;height:13.5px;background:#f0f0f0;"></div>
<div class="b" style="left:267px;top:372.5px;width:444.6px;height:12.3px;background:#cdcdcd;"></div>
<svg class="b" style="left:755.5px;top:375px" width="5" height="7" viewBox="0 0 5 7"><path d="M.8 .8 L3.7 3.5 L.8 6.2" stroke="#404040" stroke-width="1.7" fill="none"/></svg>
<span class="t" id="t43" style="left:482.5px;top:113.4px;font-size:9.6px;line-height:13.6px;color:#111;font-family:'DejaVu Sans Mono','Liberation Mono',monospace;">onnectToServer(ChatClientEndpoint.<b style="color:#7f0055">class</b>, URI.<i>creat</i></span>
<span class="t" id="t44" style="left:482.5px;top:125.42px;font-size:9.6px;line-height:13.6px;color:#111;font-family:'DejaVu Sans Mono','Liberation Mono',monospace;">ion e) {</span>
<span class="t" id="t45" style="left:482.5px;top:209.56px;font-size:9.6px;line-height:13.6px;color:#111;font-family:'DejaVu Sans Mono','Liberation Mono',monospace;">ng[] <span style="color:#6a3e3e">args</span>) {</span>
<span class="t" id="t46" style="left:482.5px;top:221.57999999999998px;font-size:9.6px;line-height:13.6px;color:#111;font-family:'DejaVu Sans Mono','Liberation Mono',monospace;">in = <b style="color:#7f0055">new</b> ChatClientEndpointMain();</span>
<span class="t" id="t47" style="left:482.5px;top:245.62px;font-size:9.6px;line-height:13.6px;color:#111;font-family:'DejaVu Sans Mono','Liberation Mono',monospace;">ufferedReader(<b style="color:#7f0055">new</b> InputStreamReader(System.<b><i style="color:#0000c0">in</i></b>));</span>
<span class="t" id="t48" style="left:482.5px;top:293.7px;font-size:9.6px;line-height:13.6px;color:#111;font-family:'DejaVu Sans Mono','Liberation Mono',monospace;">ne();</span>
<span class="t" id="t49" style="left:482.5px;top:305.71999999999997px;font-size:9.6px;line-height:13.6px;color:#111;font-family:'DejaVu Sans Mono','Liberation Mono',monospace;">s(<span style="color:#6a3e3e">input</span>)) {</span>
<span class="t" id="t50" style="left:482.5px;top:317.74px;font-size:9.6px;line-height:13.6px;color:#111;font-family:'DejaVu Sans Mono','Liberation Mono',monospace;">getBasicRemote().sendText(<span style="color:#6a3e3e">input</span>);</span>
<span class="t" id="t51" style="left:482.5px;top:341.78px;font-size:9.6px;line-height:13.6px;color:#111;font-family:'DejaVu Sans Mono','Liberation Mono',monospace;"><span style="color:#6a3e3e">nput</span>));</span>
<div class="b" style="left:266px;top:390.7px;width:525px;height:230px;background:#f0f0f0;border:1px solid #b4b4b4;border-top:1px solid #a2a2a2;border-radius:0 4px 0 0;"></div>
<div class="b" style="left:267px;top:391.7px;width:523px;height:17.5px;background:#ededed;border-radius:0 4px 0 0;"></div>
<div class="b" style="left:267px;top:409.4px;width:523px;height:1px;background:#c8c8c8;"></div>
<div class="b" style="left:267px;top:410.4px;width:523px;height:1.1px;background:#fcfcfc;"></div>
<div class="b" style="left:267px;top:411.5px;width:523px;height:12.5px;background:#f1f1f1;"></div>
<div class="b" style="left:267px;top:424px;width:521px;height:1px;background:#ababab;"></div>
<svg class="b" style="left:675px;top:394px" width="13" height="12" viewBox="0 0 13 12"><rect x=".5" y="4.5" width="9" height="7" fill="#e6e6e6" stroke="#c4c4c4"/><path d="M6 6 L10 2 L12 4 L9 6.5Z" fill="#b8b8b8"/></svg>
<svg class="b" style="left:694px;top:395px" width="12" height="12" viewBox="0 0 12 12"><rect x=".5" y=".5" width="10" height="8" fill="#e8e8e8" stroke="#9a9a9a"/><path d="M2.5 3h6M2.5 5.5h4" stroke="#888"/><path d="M3 11.2h5.5M5.7 8.5v2.5" stroke="#9a9a9a" stroke-width="1.2"/></svg>
<svg class="b" style="left:711px;top:399px" width="6" height="4" viewBox="0 0 6 4"><path d="M0 0 H6 L3 3.5 Z" fill="#777"/></svg>
<svg class="b" style="left:724px;top:394px" width="13" height="13" viewBox="0 0 13 13"><rect x=".5" y="3.5" width="10" height="8.5" fill="#fff" stroke="#8a8a8a"/><rect x=".5" y="3.5" width="10" height="2.5" fill="#4f7fc0"/><path d="M10.5 0 l.9 2 l2 .8 l-2 .8 l-.9 2 l-.9 -2 l-2 -.8 l2 -.8z" fill="#e8b93a"/></svg>
<svg class="b" style="left:742px;top:399px" width="6" height="4" viewBox="0 0 6 4"><path d="M0 0 H6 L3 3.5 Z" fill="#222"/></svg>
<div class="b" style="left:755.3px;top:395.9px;width:7.8px;height:3.4px;background:#fff;border:1px solid #808080;"></div>
<div class="b" style="left:773.0999999999999px;top:395.7px;width:8.6px;height:8px;background:#fff;border:1px solid #707070;border-top:1.8px solid #5a5a5a;"></div>
<svg class="b" style="left:795.4px;top:87.8px" width="8" height="7" viewBox="0 0 8 7"><rect x="2.6" y=".6" width="4.8" height="3.6" fill="#fff" stroke="#4a4a4a" stroke-width=".9"/><path d="M2.6 1.1h4.8" stroke="#4a4a4a" stroke-width="1.3"/><rect x=".6" y="2.8" width="4.8" height="3.6" fill="#fff" stroke="#4a4a4a" stroke-width=".9"/><path d="M.6 3.3h4.8" stroke="#4a4a4a" stroke-width="1.3"/></svg>
<svg class="b" style="left:794px;top:101px" width="12" height="14" viewBox="0 0 12 14"><path d="M.5 4 L3.5 1 V3 H6.5 V1 L9.5 4 L6.5 7 V5 H3.5 V7Z" fill="#f0b84a" stroke="#2a5ab0" stroke-width=".8"/><path d="M5 7 V12 H8" stroke="#3a6ac0" fill="none"/><rect x="8" y="7.5" width="3" height="2.2" fill="#3a6ac0"/><rect x="8" y="11" width="3" height="2.2" fill="#3a6ac0"/></svg>
<svg class="b" style="left:794px;top:121px" width="12" height="12" viewBox="0 0 12 12"><rect x=".5" y=".5" width="4" height="3.5" fill="#fff" stroke="#3a6ac0"/><rect x=".5" y="7.5" width="4" height="3.5" fill="#fff" stroke="#3a6ac0"/><path d="M6.5 1.5h4M6.5 3.5h3M6.5 8.5h4M6.5 10.5h3" stroke="#5a8ad0"/><path d="M2.5 4v3.5" stroke="#3a6ac0"/></svg>
<div class="b" style="left:245.5px;top:100px;width:239.5px;height:520px;background:#f0f0f0;border:1px solid #a0a0a0;border-right:1.6px solid #c4c4c4;"></div>
<div class="b" style="left:269.6px;top:102px;width:1px;height:516px;background:#e4e4e4;"></div>
<div class="b" style="left:270.6px;top:102px;width:1px;height:516px;background:#fbfbfb;"></div>
<span class="t" id="t52" style="left:274.3px;top:104.25px;font-size:9.87px;line-height:14.5px;color:#111;font-family:'DejaVu Sans','Noto Sans CJK JP',sans-serif;"><span class="j" style="margin-right:-0.170em">新規</span>(N)</span>
<svg class="b" style="left:471.3px;top:108.7px" width="3.4" height="5.6" viewBox="0 0 3.4 5.6"><path d="M0 0 L3.3 2.8 L0 5.6Z" fill="#1a1a1a"/></svg>
<div class="b" style="left:271.6px;top:122.575px;width:210.4px;height:1px;background:#d9d9d9;"></div>
<div class="b" style="left:271.6px;top:123.575px;width:210.4px;height:1px;background:#fcfcfc;"></div>
<span class="t" id="t53" style="left:274.3px;top:127.4px;font-size:9.87px;line-height:14.5px;color:#111;font-family:'DejaVu Sans','Noto Sans CJK JP',sans-serif;"><span class="j" style="margin-right:-0.255em">型階層</span><span class="h" style="margin-right:-0.238em">を</span><span class="j" style="margin-right:-0.085em">開</span><span class="h" style="margin-right:-0.238em">く</span>(N)</span>
<span class="t" id="t54" style="right:346px;transform-origin:100% 50%;top:127.4px;font-size:9.87px;line-height:14.5px;color:#111;font-family:'DejaVu Sans','Noto Sans CJK JP',sans-serif;">F4</span>
<span class="t" id="t55" style="left:274.3px;top:144.95000000000002px;font-size:9.87px;line-height:14.5px;color:#111;font-family:'DejaVu Sans','Noto Sans CJK JP',sans-serif;"><span class="j" style="margin-right:-0.170em">表示</span>(W)</span>
<span class="t" id="t56" style="right:346px;transform-origin:100% 50%;top:144.95000000000002px;font-size:9.87px;line-height:14.5px;color:#111;font-family:'DejaVu Sans','Noto Sans CJK JP',sans-serif;">Alt+<span class="k" style="margin-right:-1.222em">シフト</span>+W</span>
<svg class="b" style="left:471.3px;top:149.4px" width="3.4" height="5.6" viewBox="0 0 3.4 5.6"><path d="M0 0 L3.3 2.8 L0 5.6Z" fill="#1a1a1a"/></svg>
<span class="t" id="t57" style="left:274.3px;top:162.50000000000003px;font-size:9.87px;line-height:14.5px;color:#111;font-family:'DejaVu Sans','Noto Sans CJK JP',sans-serif;"><span class="j" style="margin-right:-0.085em">開</span><span class="h" style="margin-right:-0.238em">く</span>(O)</span>
<span class="t" id="t58" style="right:346px;transform-origin:100% 50%;top:162.50000000000003px;font-size:9.87px;line-height:14.5px;color:#111;font-family:'DejaVu Sans','Noto Sans CJK JP',sans-serif;">F3</span>
<span class="t" id="t59" style="left:274.3px;top:180.05000000000004px;font-size:9.87px;line-height:14.5px;color:#111;font-family:'DejaVu Sans','Noto Sans CJK JP',sans-serif;"><span class="k" style="margin-right:-3.259em">アプリケーション</span><span class="h" style="margin-right:-0.476em">から</span><span class="j" style="margin-right:-0.085em">開</span><span class="h" style="margin-right:-0.238em">く</span>(H)</span>
<svg class="b" style="left:471.3px;top:184.50000000000003px" width="3.4" height="5.6" viewBox="0 0 3.4 5.6"><path d="M0 0 L3.3 2.8 L0 5.6Z" fill="#1a1a1a"/></svg>
<div class="b" style="left:271.6px;top:198.37500000000003px;width:210.4px;height:1px;background:#d9d9d9;"></div>
<div class="b" style="left:271.6px;top:199.37500000000003px;width:210.4px;height:1px;background:#fcfcfc;"></div>
<span class="t" id="t60" style="left:274.3px;top:203.20000000000005px;font-size:9.87px;line-height:14.5px;color:#111;font-family:'DejaVu Sans','Noto Sans CJK JP',sans-serif;"><span class="k" style="margin-right:-1.222em">コピー</span>(C)</span>
<span class="t" id="t61" style="right:346px;transform-origin:100% 50%;top:203.20000000000005px;font-size:9.87px;line-height:14.5px;color:#111;font-family:'DejaVu Sans','Noto Sans CJK JP',sans-serif;">Ctrl+C</span>
<span class="t" id="t62" style="left:274.3px;top:220.75000000000006px;font-size:9.87px;line-height:14.5px;color:#111;font-family:'DejaVu Sans','Noto Sans CJK JP',sans-serif;"><span class="j" style="margin-right:-0.255em">修飾名</span><span class="h" style="margin-right:-0.238em">の</span><span class="k" style="margin-right:-1.222em">コピー</span>(Y)</span>
<span class="t" id="t63" style="left:274.3px;top:238.30000000000007px;font-size:9.87px;line-height:14.5px;color:#111;font-family:'DejaVu Sans','Noto Sans CJK JP',sans-serif;"><span class="j" style="margin-right:-0.085em">貼</span><span class="h" style="margin-right:-0.238em">り</span><span class="j" style="margin-right:-0.085em">付</span><span class="h" style="margin-right:-0.238em">け</span>(P)</span>
<span class="t" id="t64" style="right:346px;transform-origin:100% 50%;top:238.30000000000007px;font-size:9.87px;line-height:14.5px;color:#111;font-family:'DejaVu Sans','Noto Sans CJK JP',sans-serif;">Ctrl+V</span>
<span class="t" id="t65" style="left:274.3px;top:255.85000000000008px;font-size:9.87px;line-height:14.5px;color:#111;font-family:'DejaVu Sans','Noto Sans CJK JP',sans-serif;"><span class="j" style="margin-right:-0.170em">削除</span>(D)</span>
<span class="t" id="t66" style="right:346px;transform-origin:100% 50%;top:255.85000000000008px;font-size:9.87px;line-height:14.5px;color:#111;font-family:'DejaVu Sans','Noto Sans CJK JP',sans-serif;"><span class="j" style="margin-right:-0.170em">削除</span></span>
<span class="t" id="t67" style="left:274.3px;top:273.4000000000001px;font-size:9.87px;line-height:14.5px;color:#111;font-family:'DejaVu Sans','Noto Sans CJK JP',sans-serif;"><span class="k" style="margin-right:-2.444em">ビルド・パス</span>(B)</span>
<svg class="b" style="left:471.3px;top:277.8500000000001px" width="3.4" height="5.6" viewBox="0 0 3.4 5.6"><path d="M0 0 L3.3 2.8 L0 5.6Z" fill="#1a1a1a"/></svg>
<span class="t" id="t68" style="left:274.3px;top:290.9500000000001px;font-size:9.87px;line-height:14.5px;color:#111;font-family:'DejaVu Sans','Noto Sans CJK JP',sans-serif;"><span class="k" style="margin-right:-1.222em">ソース</span>(S)</span>
<span class="t" id="t69" style="right:346px;transform-origin:100% 50%;top:290.9500000000001px;font-size:9.87px;line-height:14.5px;color:#111;font-family:'DejaVu Sans','Noto Sans CJK JP',sans-serif;">Alt+<span class="k" style="margin-right:-1.222em">シフト</span>+S</span>
<svg class="b" style="left:471.3px;top:295.4000000000001px" width="3.4" height="5.6" viewBox="0 0 3.4 5.6"><path d="M0 0 L3.3 2.8 L0 5.6Z" fill="#1a1a1a"/></svg>
<span class="t" id="t70" style="left:274.3px;top:308.5000000000001px;font-size:9.87px;line-height:14.5px;color:#111;font-family:'DejaVu Sans','Noto Sans CJK JP',sans-serif;"><span class="k" style="margin-right:-3.259em">リファクタリング</span>(T)</span>
<span class="t" id="t71" style="right:346px;transform-origin:100% 50%;top:308.5000000000001px;font-size:9.87px;line-height:14.5px;color:#111;font-family:'DejaVu Sans','Noto Sans CJK JP',sans-serif;">Alt+<span class="k" style="margin-right:-1.222em">シフト</span>+T</span>
<svg class="b" style="left:471.3px;top:312.9500000000001px" width="3.4" height="5.6" viewBox="0 0 3.4 5.6"><path d="M0 0 L3.3 2.8 L0 5.6Z" fill="#1a1a1a"/></svg>
<div class="b" style="left:271.6px;top:326.82500000000016px;width:210.4px;height:1px;background:#d9d9d9;"></div>
<div class="b" style="left:271.6px;top:327.82500000000016px;width:210.4px;height:1px;background:#fcfcfc;"></div>
<span class="t" id="t72" style="left:274.3px;top:331.65000000000015px;font-size:9.87px;line-height:14.5px;color:#111;font-family:'DejaVu Sans','Noto Sans CJK JP',sans-serif;"><span class="k" style="margin-right:-2.037em">インポート</span>(I)...</span>
<span class="t" id="t73" style="left:274.3px;top:349.20000000000016px;font-size:9.87px;line-height:14.5px;color:#111;font-family:'DejaVu Sans','Noto Sans CJK JP',sans-serif;"><span class="k" style="margin-right:-2.444em">エクスポート</span>(O)...</span>
<div class="b" style="left:271.6px;top:367.5250000000002px;width:210.4px;height:1px;background:#d9d9d9;"></div>
<div class="b" style="left:271.6px;top:368.5250000000002px;width:210.4px;height:1px;background:#fcfcfc;"></div>
<span class="t" id="t74" style="left:274.3px;top:372.3500000000002px;font-size:9.87px;line-height:14.5px;color:#111;font-family:'DejaVu Sans','Noto Sans CJK JP',sans-serif;"><span class="j" style="margin-right:-0.170em">更新</span>(F)</span>
<span class="t" id="t75" style="right:346px;transform-origin:100% 50%;top:372.3500000000002px;font-size:9.87px;line-height:14.5px;color:#111;font-family:'DejaVu Sans','Noto Sans CJK JP',sans-serif;">F5</span>
<div class="b" style="left:271.6px;top:390.67500000000024px;width:210.4px;height:1px;background:#d9d9d9;"></div>
<div class="b" style="left:271.6px;top:391.67500000000024px;width:210.4px;height:1px;background:#fcfcfc;"></div>
<span class="t" id="t76" style="left:274.3px;top:395.5000000000002px;font-size:9.87px;line-height:14.5px;color:#111;font-family:'DejaVu Sans','Noto Sans CJK JP',sans-serif;"><span class="j" style="margin-right:-0.170em">参照</span>(F)</span>
<svg class="b" style="left:471.3px;top:399.9500000000002px" width="3.4" height="5.6" viewBox="0 0 3.4 5.6"><path d="M0 0 L3.3 2.8 L0 5.6Z" fill="#1a1a1a"/></svg>
<span class="t" id="t77" style="left:274.3px;top:413.05000000000024px;font-size:9.87px;line-height:14.5px;color:#111;font-family:'DejaVu Sans','Noto Sans CJK JP',sans-serif;"><span class="j" style="margin-right:-0.170em">宣言</span>(L)</span>
<svg class="b" style="left:471.3px;top:417.5000000000002px" width="3.4" height="5.6" viewBox="0 0 3.4 5.6"><path d="M0 0 L3.3 2.8 L0 5.6Z" fill="#1a1a1a"/></svg>
<div class="b" style="left:271.6px;top:431.3750000000003px;width:210.4px;height:1px;background:#d9d9d9;"></div>
<div class="b" style="left:271.6px;top:432.3750000000003px;width:210.4px;height:1px;background:#fcfcfc;"></div>
<span class="t" id="t78" style="left:274.3px;top:436.2000000000003px;font-size:9.87px;line-height:14.5px;color:#111;font-family:'DejaVu Sans','Noto Sans CJK JP',sans-serif;"><span class="k" style="margin-right:-2.444em">プロファイル</span>(P)</span>
<svg class="b" style="left:471.3px;top:440.65000000000026px" width="3.4" height="5.6" viewBox="0 0 3.4 5.6"><path d="M0 0 L3.3 2.8 L0 5.6Z" fill="#1a1a1a"/></svg>
<span class="t" id="t79" style="left:274.3px;top:453.7500000000003px;font-size:9.87px;line-height:14.5px;color:#111;font-family:'DejaVu Sans','Noto Sans CJK JP',sans-serif;"><span class="k" style="margin-right:-1.630em">デバッグ</span>(D)</span>
<svg class="b" style="left:471.3px;top:458.2000000000003px" width="3.4" height="5.6" viewBox="0 0 3.4 5.6"><path d="M0 0 L3.3 2.8 L0 5.6Z" fill="#1a1a1a"/></svg>
<div class="b" style="left:247.5px;top:469.7500000000003px;width:234.5px;height:17.6px;background:#d3e5f7;border:1px solid #84b4e4;"></div>
<span class="t" id="t80" style="left:274.3px;top:471.3000000000003px;font-size:9.87px;line-height:14.5px;color:#111;font-family:'DejaVu Sans','Noto Sans CJK JP',sans-serif;"><span class="j" style="margin-right:-0.170em">実行</span>(R)</span>
<svg class="b" style="left:471.3px;top:475.7500000000003px" width="3.4" height="5.6" viewBox="0 0 3.4 5.6"><path d="M0 0 L3.3 2.8 L0 5.6Z" fill="#1a1a1a"/></svg>
<span class="t" id="t81" style="left:274.3px;top:488.8500000000003px;font-size:9.87px;line-height:14.5px;color:#111;font-family:'DejaVu Sans','Noto Sans CJK JP',sans-serif;"><span class="j" style="margin-right:-0.170em">検証</span>(V)</span>
<span class="t" id="t82" style="left:274.3px;top:506.4000000000003px;font-size:9.87px;line-height:14.5px;color:#111;font-family:'DejaVu Sans','Noto Sans CJK JP',sans-serif;"><span class="k" style="margin-right:-1.222em">チーム</span>(E)</span>
<svg class="b" style="left:471.3px;top:510.8500000000003px" width="3.4" height="5.6" viewBox="0 0 3.4 5.6"><path d="M0 0 L3.3 2.8 L0 5.6Z" fill="#1a1a1a"/></svg>
<span class="t" id="t83" style="left:274.3px;top:523.9500000000003px;font-size:9.87px;line-height:14.5px;color:#111;font-family:'DejaVu Sans','Noto Sans CJK JP',sans-serif;"><span class="j" style="margin-right:-0.170em">比較</span></span>
<svg class="b" style="left:471.3px;top:528.4000000000003px" width="3.4" height="5.6" viewBox="0 0 3.4 5.6"><path d="M0 0 L3.3 2.8 L0 5.6Z" fill="#1a1a1a"/></svg>
<span class="t" id="t84" style="left:274.3px;top:541.5000000000002px;font-size:9.87px;line-height:14.5px;color:#111;font-family:'DejaVu Sans','Noto Sans CJK JP',sans-serif;"><span class="j" style="margin-right:-0.340em">置換対象</span>(L)</span>
<svg class="b" style="left:471.3px;top:545.9500000000003px" width="3.4" height="5.6" viewBox="0 0 3.4 5.6"><path d="M0 0 L3.3 2.8 L0 5.6Z" fill="#1a1a1a"/></svg>
<span class="t" id="t85" style="left:274.3px;top:559.0500000000002px;font-size:9.87px;line-height:14.5px;color:#111;font-family:'DejaVu Sans','Noto Sans CJK JP',sans-serif;"><span class="k" style="margin-right:-1.630em">ローカル</span><span class="j" style="margin-right:-0.170em">履歴</span><span class="h" style="margin-right:-0.476em">から</span><span class="j" style="margin-right:-0.170em">復元</span>(Y)...</span>
<span class="t" id="t86" style="left:274.3px;top:576.6000000000001px;font-size:9.87px;line-height:14.5px;color:#111;font-family:'DejaVu Sans','Noto Sans CJK JP',sans-serif;">Web <span class="k" style="margin-right:-1.630em">サービス</span></span>
<svg class="b" style="left:471.3px;top:581.0500000000002px" width="3.4" height="5.6" viewBox="0 0 3.4 5.6"><path d="M0 0 L3.3 2.8 L0 5.6Z" fill="#1a1a1a"/></svg>
<div class="b" style="left:271.6px;top:594.9250000000002px;width:210.4px;height:1px;background:#d9d9d9;"></div>
<div class="b" style="left:271.6px;top:595.9250000000002px;width:210.4px;height:1px;background:#fcfcfc;"></div>
<span class="t" id="t87" style="left:274.3px;top:599.7500000000001px;font-size:9.87px;line-height:14.5px;color:#111;font-family:'DejaVu Sans','Noto Sans CJK JP',sans-serif;"><span class="k" style="margin-right:-2.037em">プロパティ</span>(R)</span>
<span class="t" id="t88" style="right:346px;transform-origin:100% 50%;top:599.7500000000001px;font-size:9.87px;line-height:14.5px;color:#111;font-family:'DejaVu Sans','Noto Sans CJK JP',sans-serif;">Alt+Enter</span>
<svg class="b" style="left:251.3px;top:203.95px" width="13.00" height="13.00" viewBox="0 0 13 13"><rect x=".6" y=".6" width="7.4" height="9.4" fill="#fff" stroke="#8aa0c6" stroke-width="1"/><path d="M2 3h4.6M2 5h4.6M2 7h4.6" stroke="#a8bcdc" stroke-width=".9"/><rect x="4.2" y="2.6" width="8" height="9.8" fill="#fff" stroke="#6f8cbc" stroke-width="1"/><path d="M6 5.4h4.6M6 7.4h4.6M6 9.4h4.6" stroke="#8fa9d6" stroke-width=".9"/></svg>
<svg class="b" style="left:251.3px;top:221.50px" width="13.00" height="13.00" viewBox="0 0 13 13"><path d="M1.6 2.2 h3 l1 1.2 h2.6 v6 h-6.6z" fill="#fbeab0" stroke="#c9a24c" stroke-width=".9"/><path d="M4.2 4.6 h3.2 l1 1.2 h4 v6.6 h-8.2z" fill="#fdf6d8" stroke="#b89a54" stroke-width=".9"/><rect x="4.2" y="7.4" width="8.2" height="2.6" fill="#5b86c8"/><path d="M5.2 11.2h6.2" stroke="#8aa0c8" stroke-width=".8"/></svg>
<svg class="b" style="left:251.3px;top:239.05px" width="13.00" height="13.00" viewBox="0 0 13 13"><rect x="1" y="1.8" width="9.4" height="10.4" rx=".8" fill="#ecc988" stroke="#b8924a" stroke-width="1"/><rect x="3.4" y=".6" width="4.6" height="2.6" fill="#d4d4d4" stroke="#8c8c8c" stroke-width=".7"/><rect x="5.6" y="4.8" width="6.6" height="7.6" fill="#fff" stroke="#8c9cb8" stroke-width=".9"/><path d="M7 7.2h3.6M7 9h3.6M7 10.8h2.6" stroke="#a8bcdc" stroke-width=".8"/></svg>
<svg class="b" style="left:252px;top:257.60px" width="12.00" height="11.00" viewBox="0 0 12 11"><path d="M2 2 L10 9 M10 2 L2 9" stroke="#e0453f" stroke-width="3" stroke-linecap="round"/><path d="M2.4 2.2 L5 4.4 M9.6 2.2 L7.4 4" stroke="#f08a80" stroke-width="1" stroke-linecap="round"/></svg>
<svg class="b" style="left:251.3px;top:332.90px" width="13.00" height="12.00" viewBox="0 0 13 12"><path d="M.6 5.6 v5.8 h11.8 v-5.8 h-2.2 v3.2 h-7.4 v-3.2z" fill="#b4c9e6" stroke="#6f8fc0" stroke-width=".9"/><path d="M1.6 .8 L6.6 5.6" stroke="#4f7fc6" stroke-width="1.2"/><path d="M8 7 l-3.6 -.7 l2.9 -2.9z" fill="#34508c"/></svg>
<svg class="b" style="left:251.3px;top:350.45px" width="13.00" height="12.00" viewBox="0 0 13 12"><path d="M.6 5.6 v5.8 h11.8 v-5.8 h-2.2 v3.2 h-7.4 v-3.2z" fill="#b4c9e6" stroke="#6f8fc0" stroke-width=".9"/><path d="M8.4 7.4 L3.4 2.4" stroke="#4f7fc6" stroke-width="1.2"/><path d="M2 1 l3.6 .7 l-2.9 2.9z" fill="#34508c"/></svg>
<svg class="b" style="left:251.8px;top:373.10px" width="12.00" height="13.00" viewBox="0 0 12 13"><path d="M2.6 .8 h5.8 l3 3 v8.6 h-8.8z" fill="#f7f6f2" stroke="#b4b4bc" stroke-width=".9"/><path d="M8.4 .8 v3 h3" fill="none" stroke="#b4b4bc" stroke-width=".8"/><path d="M5.6 4.2 a2.3 2.3 0 1 0 .6 3.6" stroke="#e2a61c" stroke-width="1.5" fill="none"/><path d="M4.2 2.4 l3.2 1.4 l-2.6 1.8z" fill="#e2a61c"/><path d="M2 9.6 a2 2 0 0 0 3.4 .4" stroke="#e2a61c" stroke-width="1.3" fill="none"/></svg>
<div class="b" style="left:480.5px;top:467.5px;width:224.5px;height:63px;background:#f0f0f0;border:1px solid #a0a0a0;border-right:1.6px solid #c4c4c4;border-bottom:1.6px solid #c4c4c4;"></div>
<div class="b" style="left:503.5px;top:469.5px;width:1px;height:58.5px;background:#e2e2e2;"></div>
<div class="b" style="left:504.5px;top:469.5px;width:1px;height:58.5px;background:#ffffff;"></div>
<div class="b" style="left:506px;top:507px;width:197px;height:1px;background:#d7d7d7;"></div>
<div class="b" style="left:506px;top:508px;width:197px;height:1px;background:#ffffff;"></div>
<div class="b" style="left:482px;top:487px;width:221px;height:17.6px;background:#d3e5f7;border:1px solid #84b4e4;"></div>
<div class="b" style="left:479.5px;top:485.5px;width:225px;height:20.5px;border:2px solid #a0182a;"></div>
<span class="t" id="t89" style="left:508px;top:472.05px;font-size:9.87px;line-height:14.5px;color:#111;font-family:'DejaVu Sans','Noto Sans CJK JP',sans-serif;">1 <span class="k" style="margin-right:-1.630em">サーバー</span><span class="h" style="margin-right:-0.238em">で</span><span class="j" style="margin-right:-0.170em">実行</span></span>
<span class="t" id="t90" style="left:623px;top:472.05px;font-size:9.87px;line-height:14.5px;color:#111;font-family:'DejaVu Sans','Noto Sans CJK JP',sans-serif;">Alt+<span class="k" style="margin-right:-1.222em">シフト</span>+X,R</span>
<span class="t" id="t91" style="left:508px;top:488.55px;font-size:9.87px;line-height:14.5px;color:#111;font-family:'DejaVu Sans','Noto Sans CJK JP',sans-serif;">2 Java <span class="k" style="margin-right:-3.259em">アプリケーション</span></span>
<span class="t" id="t92" style="left:625px;top:488.55px;font-size:9.87px;line-height:14.5px;color:#111;font-family:'DejaVu Sans','Noto Sans CJK JP',sans-serif;">Alt+<span class="k" style="margin-right:-1.222em">シフト</span>+X,J</span>
<span class="t" id="t93" style="left:508px;top:512.25px;font-size:9.87px;line-height:14.5px;color:#111;font-family:'DejaVu Sans','Noto Sans CJK JP',sans-serif;"><span class="j" style="margin-right:-0.170em">実行</span> <span class="h" style="margin-right:-0.238em">の</span><span class="j" style="margin-right:-0.170em">構成</span>(N)...</span>
<svg class="b" style="left:485px;top:472px" width="13" height="14" viewBox="0 0 13 14"><rect x="5.5" y=".5" width="6" height="10" fill="#f4f4f4" stroke="#6a6a6a" stroke-width=".9"/><path d="M7 3h3M7 5h3" stroke="#6a9a5a" stroke-width=".9"/><path d="M1 8 L5.5 10.8 L1 13.5Z" fill="#3da04a"/></svg>
<svg class="b" style="left:485.5px;top:490px" width="12" height="11" viewBox="0 0 12 11"><rect x=".5" y=".5" width="11" height="10" fill="#fff" stroke="#6a7aa0" stroke-width=".9"/><rect x=".5" y=".5" width="11" height="2.2" fill="#5a82c8"/><path d="M7 4 v3.3 a1.5 1.5 0 0 1 -2.8 .5" stroke="#2a4a98" stroke-width="1.3" fill="none"/></svg>
</body></html>
